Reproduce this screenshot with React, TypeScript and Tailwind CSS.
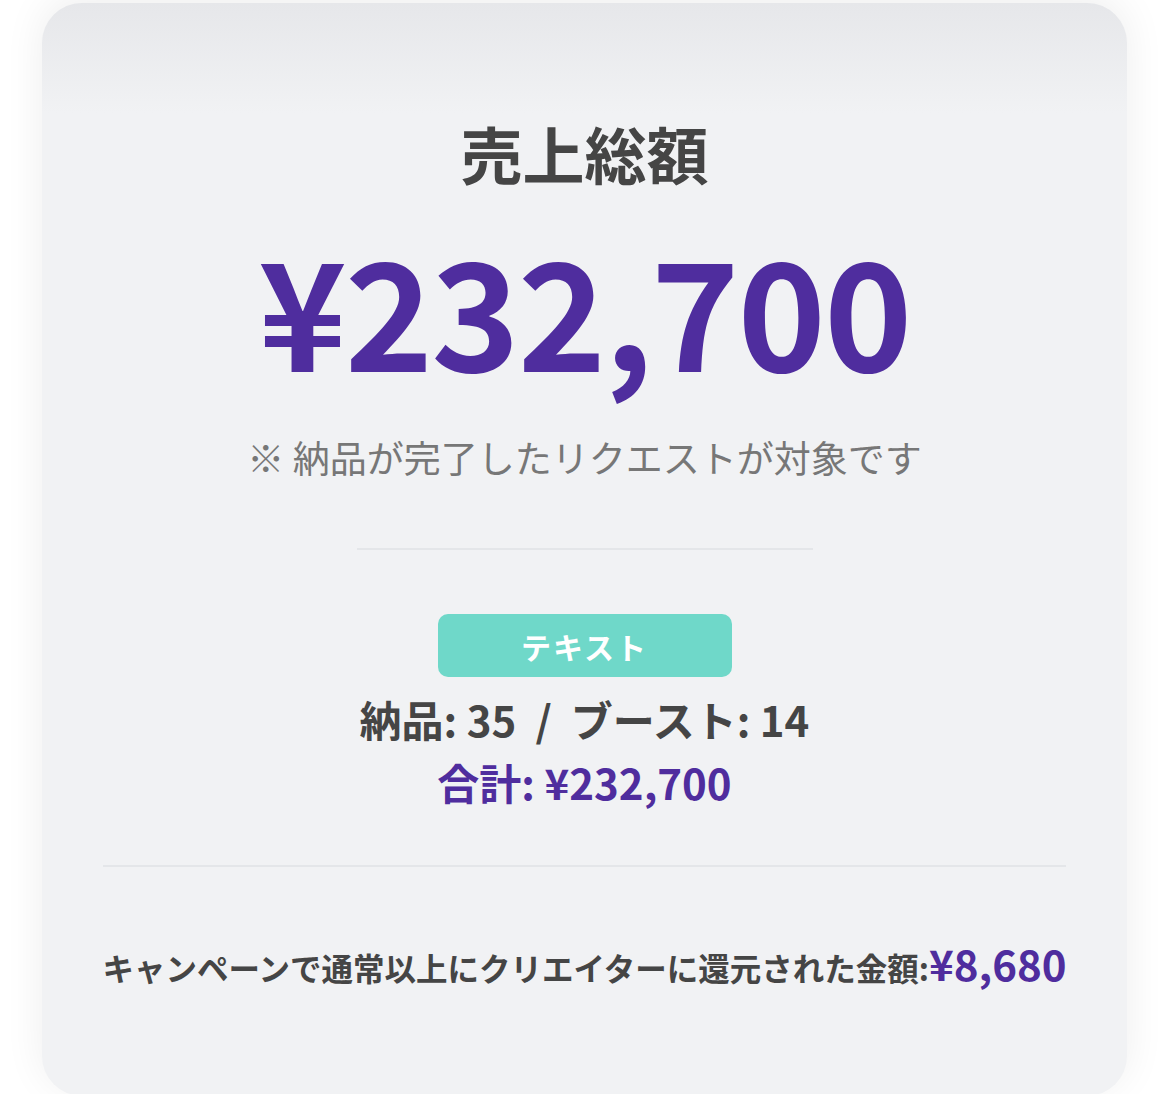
const font = "font-['Noto_Sans_CJK_JP','Noto_Sans',sans-serif]";

export default function App() {
  return (
    <div className={`min-h-screen bg-white px-[42px] pt-[3px] ${font}`}>
      <div className="relative overflow-hidden rounded-[40px] bg-[#f1f2f4] shadow-[0_-6px_40px_rgba(0,0,0,0.07)]">
        <div className="pointer-events-none absolute inset-x-0 top-0 h-[110px] bg-gradient-to-b from-[#e6e7ea] to-transparent" />

        <div className="relative flex flex-col items-center pb-[102px] pt-[119px]">
          <h1 className="text-[62px] font-bold leading-none text-[#454545]">売上総額</h1>

          <p className="mt-[48px] text-[150px] font-bold leading-none tracking-[-2px] text-[#4f2d9e]">
            ¥232,700
          </p>

          <p className="mt-[57px] text-[37px] leading-none text-[#777]">
            ※ 納品が完了したリクエストが対象です
          </p>

          <div className="mt-[72px] h-[2px] w-[456px] bg-[#e4e6e9]" />

          <div className="mt-[64px] flex h-[63px] w-[294px] items-center justify-center rounded-[10px] bg-[#6fd8c9]">
            <span className="text-[30px] font-bold leading-none tracking-[2px] text-white">テキスト</span>
          </div>

          <p className="mt-[10px] text-[42px] font-bold leading-[1.5] text-[#454545]">
            納品: 35 &nbsp;/&nbsp; ブースト: 14
          </p>
          <p className="text-[42px] font-bold leading-[1.5] text-[#4f2d9e]">合計: ¥232,700</p>

          <div className="mt-[52px] h-[2px] w-[963px] bg-[#e4e6e9]" />

          <p className="mt-[64px] flex items-baseline">
            <span className="text-[31.5px] font-bold text-[#454545]">
              キャンペーンで通常以上にクリエイターに還元された金額:
            </span>
            <span className="text-[42px] font-bold text-[#4f2d9e]">¥8,680</span>
          </p>
        </div>
      </div>
    </div>
  );
}
